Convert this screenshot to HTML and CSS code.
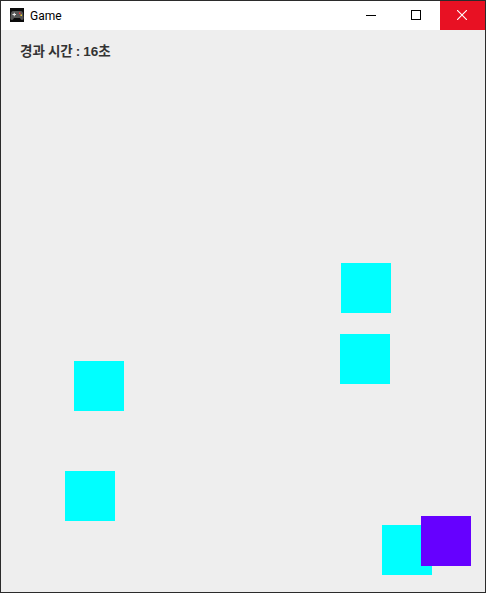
FILE: index.html
```html
<!DOCTYPE html>
<html lang="ko">
<head>
<meta charset="utf-8">
<title>Game</title>
<link rel="stylesheet" href="styles.css">
</head>
<body>
<div class="window">
  <header class="titlebar">
    <svg class="app-icon" width="14" height="14" viewBox="0 0 14 14">
      <rect width="14" height="14" fill="#0c0c0c"/>
      <path d="M3 3h8q1.500 0 2 2l.6 5q0 2-1.600 2-1 0-2-2H4q-1 2-2 2-1.600 0-1.600-2L1 5q.5-2 2-2z" fill="#565656"/>
      <path d="M2.500 6.500h3.500M4.250 4.750v3.500" stroke="#eee" stroke-width="1"/>
      <rect x="9" y="4.500" width="1.500" height="1.500" fill="#e33"/>
      <rect x="10.500" y="6.500" width="1.500" height="1.500" fill="#ec3"/>
    </svg>
    <span class="title">Game</span>
    <div class="controls">
      <div class="control">
        <svg width="10" height="10" viewBox="0 0 10 10"><path d="M0 5.500h10" stroke="#000"/></svg>
      </div>
      <div class="control">
        <svg width="10" height="10" viewBox="0 0 10 10"><rect x=".5" y=".5" width="9" height="9" fill="none" stroke="#000"/></svg>
      </div>
      <div class="control close">
        <svg width="10" height="10" viewBox="0 0 10 10"><path d="M0 0l10 10M10 0L0 10" stroke="#fff" stroke-width="1.100"/></svg>
      </div>
    </div>
  </header>
  <main class="canvas">
    <p class="time">경과 시간 : 16초</p>
    <div class="sq cyan s1"></div>
    <div class="sq cyan s2"></div>
    <div class="sq cyan s3"></div>
    <div class="sq cyan s4"></div>
    <div class="sq cyan s5"></div>
    <div class="sq purple s6"></div>
  </main>
</div>
</body>
</html>
```
FILE: styles.css
```css
* { box-sizing: border-box; }
html, body { margin: 0; padding: 0; }
body { width: 486px; height: 593px; overflow: hidden; }
.window {
  width: 486px;
  height: 593px;
  border: 1px solid #2b2b2b;
  display: flex;
  flex-direction: column;
  background: #eeeeee;
}
.titlebar {
  height: 29px;
  flex: none;
  background: #fff;
  display: flex;
  align-items: center;
  padding-left: 9px;
}
.app-icon { flex: none; margin-bottom: 1px; }
.title {
  margin-left: 6px;
  font: 12px Roboto, "Noto Sans", sans-serif;
  color: #000;
}
.controls { margin-left: auto; display: flex; height: 100%; }
.control {
  width: 45px;
  display: flex;
  align-items: center;
  justify-content: center;
  padding-right: 3px;
  padding-bottom: 1px;
}
.close { background: #e81123; padding-right: 1px; }
.canvas { flex: 1; position: relative; }
.time {
  margin: 0;
  padding: 10px 0 0 19px;
  font: bold 13.5px "Liberation Sans", "Noto Sans CJK KR", sans-serif;
  word-spacing: -0.7px;
  color: #333;
}
.sq { position: absolute; width: 50px; height: 50px; }
.cyan { background: #00ffff; }
.purple { background: #6600ff; }
.s1 { left: 340px; top: 233px; }
.s2 { left: 339px; top: 304px; }
.s3 { left: 73px; top: 331px; }
.s4 { left: 64px; top: 441px; }
.s5 { left: 381px; top: 495px; }
.s6 { left: 420px; top: 486px; }
```
